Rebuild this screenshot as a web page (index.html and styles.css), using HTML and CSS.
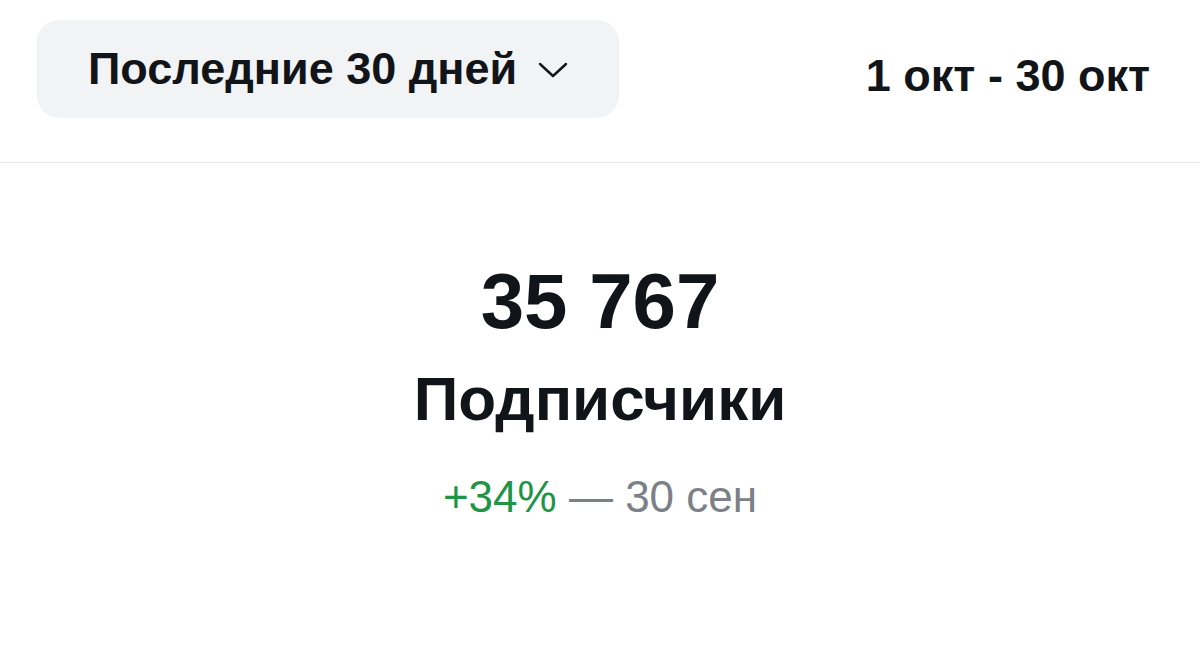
FILE: index.html
```html
<!DOCTYPE html>
<html lang="ru">
<head>
<meta charset="utf-8">
<title>Статистика канала</title>
<link rel="stylesheet" href="styles.css">
</head>
<body>
    <header class="period-bar">
        <button class="period-select" type="button">
            <span>Последние 30 дней</span>
            <svg class="chevron" width="30" height="16" viewBox="0 0 30 16" aria-hidden="true">
                <path d="M2 2 L15 14 L28 2" fill="none" stroke="currentColor" stroke-width="2.4" stroke-linecap="round" stroke-linejoin="round"/>
            </svg>
        </button>
        <div class="period-range">1 окт - 30 окт</div>
    </header>
    <main class="stat">
        <div class="stat-value">35 767</div>
        <div class="stat-label">Подписчики</div>
        <div class="stat-delta">
            <span class="delta-up">+34%</span> — 30 сен
        </div>
    </main>
</body>
</html>
```

FILE: styles.css
```css
/**
 * Base
 */
* {
    box-sizing: border-box;
}
body {
    margin: 0;
    background: #fff;
    color: #111418;
    font-family: "Liberation Sans", Arial, sans-serif;
}

/**
 * Period selector bar
 */
.period-bar {
    display: flex;
    justify-content: space-between;
    align-items: center;
    padding: 20px 50px 44px 37px;
    border-bottom: 1px solid #e7e8ea;
}
.period-select {
    display: flex;
    align-items: center;
    gap: 21px;
    height: 98px;
    padding: 0 51px;
    border: 0;
    border-radius: 22px;
    background: #f2f3f5;
    color: inherit;
    font: inherit;
    font-size: 45px;
    font-weight: bold;
    white-space: nowrap;
}
.chevron {
    flex: none;
    margin-top: 2px;
}
.period-range {
    font-size: 45px;
    font-weight: bold;
    padding-top: 14px;
    white-space: nowrap;
}

/**
 * Main figure
 */
.stat {
    display: flex;
    flex-direction: column;
    align-items: center;
    padding-top: 99px;
}
.stat-value {
    font-size: 78px;
    font-weight: bold;
    line-height: 1;
}
.stat-label {
    margin-top: 28px;
    font-size: 62px;
    font-weight: bold;
    line-height: 1;
}
.stat-delta {
    margin-top: 45px;
    font-size: 44px;
    line-height: 1;
    color: #7c8087;
}
.delta-up {
    color: #1f9447;
}
```
